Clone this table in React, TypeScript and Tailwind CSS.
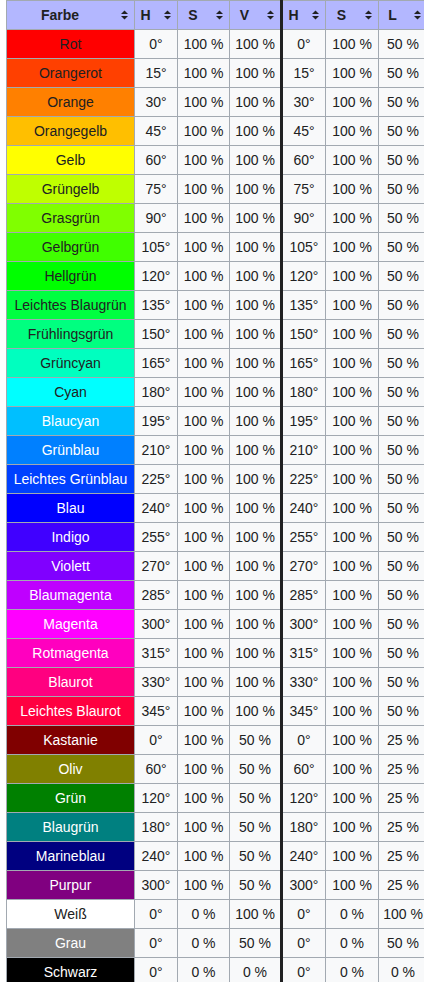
type Row = {
  name: string;
  bg: string;
  light: boolean;
  h: string;
  s: string;
  v: string;
  s2: string;
  l: string;
};

const rows: Row[] = [
  { name: "Rot", bg: "#ff0000", light: false, h: "0°", s: "100 %", v: "100 %", s2: "100 %", l: "50 %" },
  { name: "Orangerot", bg: "#ff4000", light: false, h: "15°", s: "100 %", v: "100 %", s2: "100 %", l: "50 %" },
  { name: "Orange", bg: "#ff8000", light: false, h: "30°", s: "100 %", v: "100 %", s2: "100 %", l: "50 %" },
  { name: "Orangegelb", bg: "#ffbf00", light: false, h: "45°", s: "100 %", v: "100 %", s2: "100 %", l: "50 %" },
  { name: "Gelb", bg: "#ffff00", light: false, h: "60°", s: "100 %", v: "100 %", s2: "100 %", l: "50 %" },
  { name: "Grüngelb", bg: "#bfff00", light: false, h: "75°", s: "100 %", v: "100 %", s2: "100 %", l: "50 %" },
  { name: "Grasgrün", bg: "#80ff00", light: false, h: "90°", s: "100 %", v: "100 %", s2: "100 %", l: "50 %" },
  { name: "Gelbgrün", bg: "#40ff00", light: false, h: "105°", s: "100 %", v: "100 %", s2: "100 %", l: "50 %" },
  { name: "Hellgrün", bg: "#00ff00", light: false, h: "120°", s: "100 %", v: "100 %", s2: "100 %", l: "50 %" },
  { name: "Leichtes Blaugrün", bg: "#00ff40", light: false, h: "135°", s: "100 %", v: "100 %", s2: "100 %", l: "50 %" },
  { name: "Frühlingsgrün", bg: "#00ff80", light: false, h: "150°", s: "100 %", v: "100 %", s2: "100 %", l: "50 %" },
  { name: "Grüncyan", bg: "#00ffbf", light: false, h: "165°", s: "100 %", v: "100 %", s2: "100 %", l: "50 %" },
  { name: "Cyan", bg: "#00ffff", light: false, h: "180°", s: "100 %", v: "100 %", s2: "100 %", l: "50 %" },
  { name: "Blaucyan", bg: "#00bfff", light: true, h: "195°", s: "100 %", v: "100 %", s2: "100 %", l: "50 %" },
  { name: "Grünblau", bg: "#0080ff", light: true, h: "210°", s: "100 %", v: "100 %", s2: "100 %", l: "50 %" },
  { name: "Leichtes Grünblau", bg: "#0040ff", light: true, h: "225°", s: "100 %", v: "100 %", s2: "100 %", l: "50 %" },
  { name: "Blau", bg: "#0000ff", light: true, h: "240°", s: "100 %", v: "100 %", s2: "100 %", l: "50 %" },
  { name: "Indigo", bg: "#4000ff", light: true, h: "255°", s: "100 %", v: "100 %", s2: "100 %", l: "50 %" },
  { name: "Violett", bg: "#8000ff", light: true, h: "270°", s: "100 %", v: "100 %", s2: "100 %", l: "50 %" },
  { name: "Blaumagenta", bg: "#bf00ff", light: true, h: "285°", s: "100 %", v: "100 %", s2: "100 %", l: "50 %" },
  { name: "Magenta", bg: "#ff00ff", light: true, h: "300°", s: "100 %", v: "100 %", s2: "100 %", l: "50 %" },
  { name: "Rotmagenta", bg: "#ff00bf", light: true, h: "315°", s: "100 %", v: "100 %", s2: "100 %", l: "50 %" },
  { name: "Blaurot", bg: "#ff0080", light: true, h: "330°", s: "100 %", v: "100 %", s2: "100 %", l: "50 %" },
  { name: "Leichtes Blaurot", bg: "#ff0040", light: true, h: "345°", s: "100 %", v: "100 %", s2: "100 %", l: "50 %" },
  { name: "Kastanie", bg: "#800000", light: true, h: "0°", s: "100 %", v: "50 %", s2: "100 %", l: "25 %" },
  { name: "Oliv", bg: "#808000", light: true, h: "60°", s: "100 %", v: "50 %", s2: "100 %", l: "25 %" },
  { name: "Grün", bg: "#008000", light: true, h: "120°", s: "100 %", v: "50 %", s2: "100 %", l: "25 %" },
  { name: "Blaugrün", bg: "#008080", light: true, h: "180°", s: "100 %", v: "50 %", s2: "100 %", l: "25 %" },
  { name: "Marineblau", bg: "#000080", light: true, h: "240°", s: "100 %", v: "50 %", s2: "100 %", l: "25 %" },
  { name: "Purpur", bg: "#800080", light: true, h: "300°", s: "100 %", v: "50 %", s2: "100 %", l: "25 %" },
  { name: "Weiß", bg: "#ffffff", light: false, h: "0°", s: "0 %", v: "100 %", s2: "0 %", l: "100 %" },
  { name: "Grau", bg: "#808080", light: true, h: "0°", s: "0 %", v: "50 %", s2: "0 %", l: "50 %" },
  { name: "Schwarz", bg: "#000000", light: true, h: "0°", s: "0 %", v: "0 %", s2: "0 %", l: "0 %" },
];

function SortIcon() {
  return (
    <svg
      width="7"
      height="10"
      viewBox="0 0 7 10"
      className="absolute right-[6px] top-1/2 -translate-y-1/2"
    >
      <polygon points="0,4 3.5,0.5 7,4" fill="#202122" />
      <polygon points="0,6 3.5,9.5 7,6" fill="#202122" />
    </svg>
  );
}

function Th({ label, thick }: { label: string; thick?: boolean }) {
  return (
    <th
      className={`relative h-[29px] p-0 pr-[21px] text-center font-bold bg-[#b3b7ff] border border-[#a2a9b1] ${
        thick ? "border-l-[3px] border-l-[#202122]" : ""
      }`}
    >
      {label}
      <SortIcon />
    </th>
  );
}

const td = "h-[29px] p-0 text-center bg-[#f8f9fa] border border-[#a2a9b1]";

export default function App() {
  return (
    <div className="w-[424px] overflow-hidden bg-white pl-[6px] font-['Liberation_Sans',Arial,sans-serif] text-[14px] text-[#202122]">
      <table className="table-fixed border-collapse w-[421px]">
        <colgroup>
          <col className="w-[128px]" />
          <col className="w-[43px]" />
          <col className="w-[52px]" />
          <col className="w-[52px]" />
          <col className="w-[44px]" />
          <col className="w-[53px]" />
          <col className="w-[49px]" />
        </colgroup>
        <thead>
          <tr>
            <Th label="Farbe" />
            <Th label="H" />
            <Th label="S" />
            <Th label="V" />
            <Th label="H" thick />
            <Th label="S" />
            <Th label="L" />
          </tr>
        </thead>
        <tbody>
          {rows.map((r) => (
            <tr key={r.name}>
              <td
                className={`h-[29px] p-0 text-center border border-[#a2a9b1] whitespace-nowrap ${
                  r.light ? "text-white" : "text-[#202122]"
                }`}
                style={{ backgroundColor: r.bg }}
              >
                {r.name}
              </td>
              <td className={td}>{r.h}</td>
              <td className={td}>{r.s}</td>
              <td className={td}>{r.v}</td>
              <td className={`${td} border-l-[3px] border-l-[#202122]`}>{r.h}</td>
              <td className={td}>{r.s2}</td>
              <td className={td}>{r.l}</td>
            </tr>
          ))}
        </tbody>
      </table>
    </div>
  );
}
